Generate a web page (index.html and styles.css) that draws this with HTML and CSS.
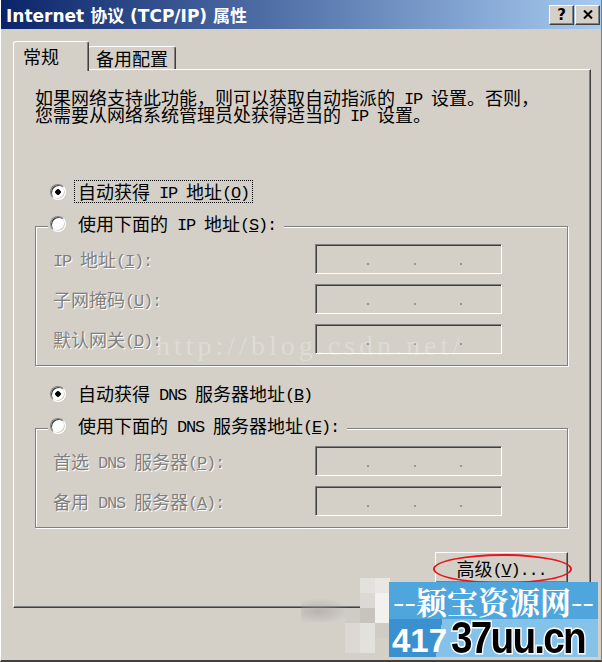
FILE: index.html
```html
<!DOCTYPE html>
<html lang="zh-CN">
<head>
    <meta charset="UTF-8">
    <meta name="viewport" content="width=device-width, initial-scale=1.0">
    <title>Internet 协议 (TCP/IP) 属性</title>
    <link rel="stylesheet" href="styles.css">
</head>
<body>
    <div class="window">
        <div class="titlebar">
            <span class="title">Internet 协议 (TCP/IP) 属性</span>
            <div class="caption-btns">
                <button class="cap-btn help">?</button>
                <button class="cap-btn">
                    <svg width="10" height="9" viewBox="0 0 10 9"><path d="M1 0.5L9 8.5M9 0.5L1 8.5" stroke="#000" stroke-width="2" fill="none"/></svg>
                </button>
            </div>
        </div>

        <div class="tabs">
            <div class="tab active">常规</div>
            <div class="tab">备用配置</div>
        </div>

        <div class="panel">
            <p class="intro">如果网络支持此功能，则可以获取自动指派的<span class="en"> IP </span>设置。否则，<br>您需要从网络系统管理员处获得适当的<span class="en"> IP </span>设置。</p>

            <div class="opt-row">
                <input class="radio" type="radio" name="ip" checked>
                <label class="focus">自动获得<span class="en"> IP </span>地址<span class="en">(<u>O</u>)</span></label>
            </div>
            <div class="group">
                <div class="group-title">
                    <input class="radio" type="radio" name="ip">
                    <label>使用下面的<span class="en"> IP </span>地址<span class="en">(<u>S</u>):</span></label>
                </div>
                <div class="field">
                    <span class="dis"><span class="en">IP </span>地址<span class="en">(<u>I</u>):</span></span>
                    <div class="ip"><i></i><i></i><i></i></div>
                </div>
                <div class="field">
                    <span class="dis">子网掩码<span class="en">(<u>U</u>):</span></span>
                    <div class="ip"><i></i><i></i><i></i></div>
                </div>
                <div class="field">
                    <span class="dis">默认网关<span class="en">(<u>D</u>):</span></span>
                    <div class="ip"><i></i><i></i><i></i></div>
                </div>
            </div>

            <div class="opt-row">
                <input class="radio" type="radio" name="dns" checked>
                <label>自动获得<span class="en"> DNS </span>服务器地址<span class="en">(<u>B</u>)</span></label>
            </div>
            <div class="group">
                <div class="group-title">
                    <input class="radio" type="radio" name="dns">
                    <label>使用下面的<span class="en"> DNS </span>服务器地址<span class="en">(<u>E</u>):</span></label>
                </div>
                <div class="field">
                    <span class="dis">首选<span class="en"> DNS </span>服务器<span class="en">(<u>P</u>):</span></span>
                    <div class="ip"><i></i><i></i><i></i></div>
                </div>
                <div class="field">
                    <span class="dis">备用<span class="en"> DNS </span>服务器<span class="en">(<u>A</u>):</span></span>
                    <div class="ip"><i></i><i></i><i></i></div>
                </div>
            </div>

            <div class="actions">
                <button class="adv">高级<span class="en">(<u>V</u>)...</span></button>
            </div>
        </div>

        <div class="csdn">http://blog.csdn.net/</div>

        <div class="smudge"></div>
        <div class="mosaic">
            <i></i><i class="m2"></i><i class="m3"></i>
            <i></i><i class="m1"></i><i class="m4"></i>
            <i class="m5"></i><i class="m6"></i><i class="m4"></i>
            <i class="m1"></i><i class="m2"></i><i class="m5"></i>
            <i class="m1"></i><i class="m2"></i><i></i>
        </div>

        <div class="wm">
            <div class="wm-top">--颖宝资源网--</div>
            <div class="wm-bottom">
                <span class="wm-num">417</span>
                <span class="wm-domain">37uu.cn</span>
            </div>
        </div>
    </div>
</body>
</html>
```

FILE: styles.css
```css
* {
    box-sizing: border-box;
}
body {
    margin: 0;
    width: 602px;
    height: 662px;
    overflow: hidden;
    background-color: #d4d0c8;
    font: 18px "Noto Sans CJK SC", sans-serif;
    color: #000;
}
.window {
    position: relative;
    width: 602px;
    height: 662px;
    background-color: #d4d0c8;
    border-left: 1px solid #fff;
    border-right: 1px solid #808080;
    border-bottom: 2px solid #404040;
}
.en {
    font-family: "Liberation Mono", monospace;
    font-size: 17px;
    letter-spacing: -1.2px;
    line-height: 0;
    vertical-align: 1px;
}

/* title bar */
.titlebar {
    display: flex;
    align-items: center;
    justify-content: space-between;
    height: 29px;
    padding: 0 1px 0 5px;
    background: linear-gradient(to right, #0a246a, #a6caf0);
}
.title {
    color: #fff;
    font: bold 17px "DejaVu Sans", "Noto Sans CJK SC", sans-serif;
    white-space: nowrap;
}
.caption-btns {
    display: flex;
    gap: 1px;
}
.cap-btn {
    display: flex;
    align-items: center;
    justify-content: center;
    width: 25px;
    height: 20px;
    padding: 0;
    background-color: #d4d0c8;
    border: 1px solid;
    border-color: #fff #404040 #404040 #fff;
    box-shadow: inset -1px -1px 0 #808080;
    font: bold 15px "DejaVu Sans", sans-serif;
    color: #000;
}

/* tabs */
.tabs {
    display: flex;
    align-items: flex-end;
    margin: 12px 0 0 12px;
}
.tab {
    width: 88px;
    height: 23px;
    margin-left: -1px;
    padding-left: 7px;
    border: 1px solid;
    border-bottom: 0;
    border-color: #fff #404040 transparent #fff;
    border-radius: 3px 3px 0 0;
    box-shadow: inset -1px 0 0 #808080;
    line-height: 22px;
    white-space: nowrap;
}
.tab.active {
    position: relative;
    z-index: 1;
    width: 76px;
    height: 30px;
    margin: 0 0 -2px 0;
    padding-left: 9px;
    background-color: #d4d0c8;
    line-height: 28px;
}

/* panel */
.panel {
    width: 578px;
    height: 539px;
    margin-left: 12px;
    padding: 19px 22px 0 21px;
    border: 1px solid;
    border-color: #fff #404040 #404040 #fff;
    box-shadow: inset -1px -1px 0 #808080;
}
.intro {
    margin: 0 0 57px;
    line-height: 17px;
    white-space: nowrap;
}
.opt-row {
    display: flex;
    align-items: center;
    margin-top: 16px;
    padding-left: 15px;
}
.opt-row label,
.group-title label {
    border: 1px dotted transparent;
    padding: 0 3px;
    line-height: 21px;
    white-space: nowrap;
}
.opt-row label.focus {
    border-color: #000;
}
.radio {
    -webkit-appearance: none;
    appearance: none;
    flex: none;
    width: 16px;
    height: 16px;
    margin: 0 8px 0 0;
    border: 1px solid;
    border-color: #808080 #fff #fff #808080;
    border-radius: 50%;
    background: #fff;
    box-shadow: inset 1px 1px 0 #404040, inset -1px -1px 0 #d4d0c8;
}
.radio:checked {
    background: radial-gradient(circle, #000 0 2.5px, #fff 3px);
}

/* group boxes */
.group {
    margin-top: 23px;
    padding: 0 21px 11px 17px;
    border: 1px solid #808080;
    box-shadow: inset 1px 1px 0 #fff, 1px 1px 0 #fff;
}
.group-title {
    display: flex;
    align-items: center;
    width: fit-content;
    margin: -15px 0 9px -5px;
    padding: 0 4px 0 2px;
    background-color: #d4d0c8;
}
.field {
    display: grid;
    grid-template-columns: 262px 187px;
    align-items: center;
}
.field + .field {
    margin-top: 10px;
}
.dis {
    color: #808080;
    text-shadow: 1px 1px 0 #fff;
    line-height: 21px;
    white-space: nowrap;
}
.ip {
    display: flex;
    justify-content: space-between;
    align-items: flex-start;
    height: 30px;
    padding: 18px 39px 0 51px;
    border: 1px solid;
    border-color: #808080 #fff #fff #808080;
    box-shadow: inset 1px 1px 0 #404040, inset -1px -1px 0 #d4d0c8;
}
.ip i {
    width: 2px;
    height: 2px;
    background-color: #9a9893;
}

/* buttons */
.actions {
    display: flex;
    justify-content: flex-end;
    margin-top: 24px;
}
.adv {
    position: relative;
    width: 133px;
    height: 31px;
    padding: 0;
    background-color: #d4d0c8;
    border: 1px solid;
    border-color: #fff #404040 #404040 #fff;
    box-shadow: inset -1px -1px 0 #808080;
    font: inherit;
    color: #000;
}
.adv::after {
    content: "";
    position: absolute;
    left: -3px;
    top: 1px;
    width: 135px;
    height: 26px;
    border: 2px solid #e8141c;
    border-radius: 50%;
}

/* overlays on the screenshot */
.csdn {
    position: absolute;
    left: 155px;
    top: 330px;
    font: 28px "Liberation Serif", serif;
    letter-spacing: 4px;
    color: rgba(255, 255, 255, 0.25);
    white-space: nowrap;
}
.smudge {
    position: absolute;
    left: 300px;
    top: 598px;
    width: 50px;
    height: 24px;
    background: radial-gradient(ellipse at 35% 55%, rgba(160, 157, 151, 0.55), rgba(160, 157, 151, 0) 70%);
}
.mosaic {
    position: absolute;
    left: 344px;
    top: 578px;
    display: grid;
    grid-template-columns: repeat(3, 15px);
    grid-auto-rows: 15px;
}
.mosaic .m1 { background-color: #dcd9d4; }
.mosaic .m2 { background-color: #e3e1dc; }
.mosaic .m3 { background-color: #e9e7e3; }
.mosaic .m4 { background-color: #f2f1ee; }
.mosaic .m5 { background-color: #cfccc6; }
.mosaic .m6 { background-color: #c7c4be; }

.wm {
    position: absolute;
    left: 388px;
    top: 582px;
    width: 209px;
    height: 75px;
    overflow: hidden;
    background:
        linear-gradient(#4fa6dc 0 50%, transparent 50%),
        linear-gradient(100deg, #3b91cf 0 27%, #84c2ea 27%);
}
.wm-top {
    height: 38px;
    color: #fff;
    font: bold 31px/38px "Noto Serif CJK SC", "Noto Sans CJK SC", serif;
    text-align: center;
    white-space: nowrap;
}
.wm-bottom {
    display: flex;
    align-items: flex-end;
    height: 37px;
    padding-left: 3px;
}
.wm-num {
    color: #fff;
    font: bold 33px/33px "Liberation Sans", sans-serif;
}
.wm-domain {
    display: inline-block;
    margin-left: 4px;
    color: #000;
    font: bold 44px/38px "Liberation Sans", sans-serif;
    letter-spacing: -2px;
    -webkit-text-stroke: 3px #fff;
    paint-order: stroke fill;
    white-space: nowrap;
    transform: scaleX(0.88);
    transform-origin: left bottom;
}
```
